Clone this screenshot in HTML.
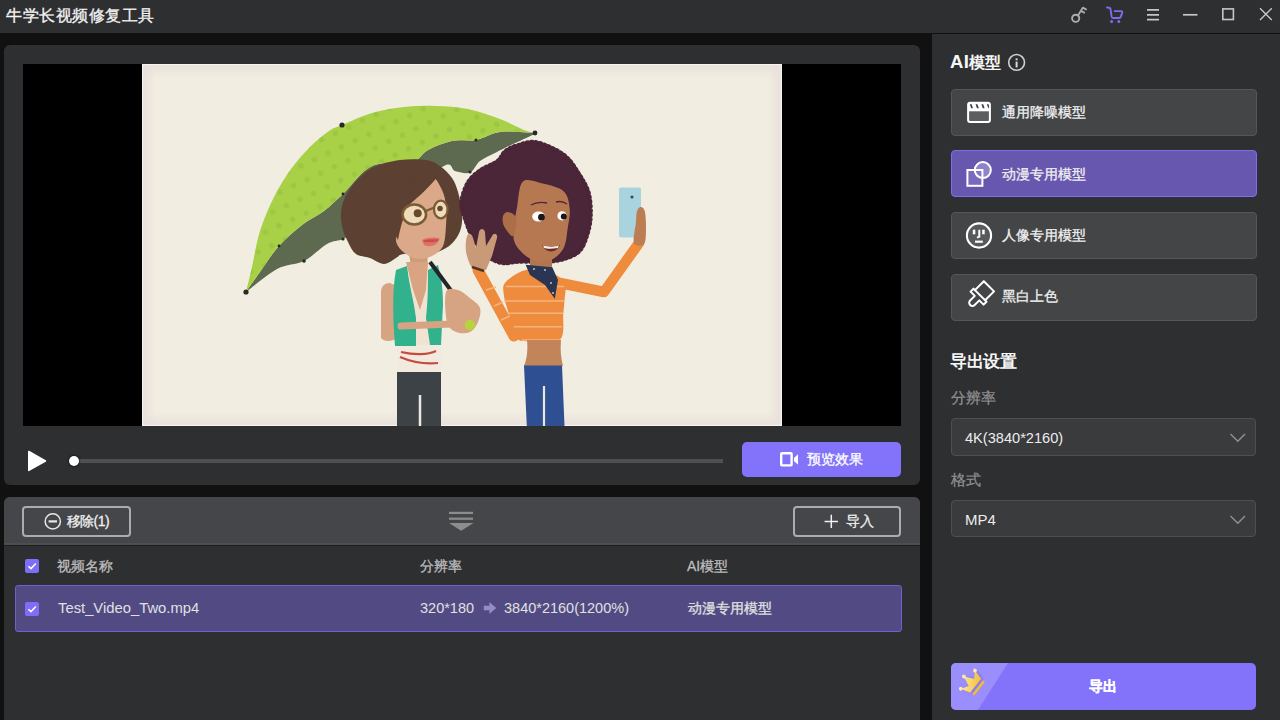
<!DOCTYPE html>
<html><head><meta charset="utf-8">
<style>
*{margin:0;padding:0;box-sizing:border-box}
html,body{width:1280px;height:720px;overflow:hidden;background:#111111;font-family:"Liberation Sans",sans-serif;color:#e6e6e6}
.a{position:absolute}
svg{position:absolute;overflow:visible}
#title{left:0;top:0;width:1280px;height:33px;background:#2e2f31}
.tt{left:6px;top:5px;font-size:16px;letter-spacing:0.5px;-webkit-text-stroke-width:0.3px;color:#f4f4f4;line-height:22px;white-space:nowrap}
#vpanel{left:4px;top:45px;width:916px;height:440px;background:#2e2f31;border-radius:6px}
#video{left:23px;top:64px;width:878px;height:362px;background:#000;overflow:hidden}
#bpanel{left:4px;top:497px;width:916px;height:223px;background:#2e2f31;border-radius:6px 6px 0 0;overflow:hidden}
#bhead{left:0;top:0;width:916px;height:49px;background:linear-gradient(#454649 0,#454649 45.7px,#4d4e50 45.7px,#4d4e50 47.5px,#1d1e20 47.5px,#1d1e20 48.8px,#2e2f31 48.8px)}
#rpanel{left:932px;top:34px;width:348px;height:686px;background:#2e2f31}
.obtn{border:2px solid #acacac;border-radius:4px;height:31.5px;top:505.5px}
.txt{white-space:nowrap;line-height:20px;-webkit-text-stroke-width:0.3px}
.mbtn{left:951px;width:305.5px;height:47px;background:#444547;border:1px solid #55565a;border-radius:4px}
.mbtn.sel{background:#6757ae;border:1.6px solid #7d6ef0}
.mtxt{left:1002px;font-size:14px;color:#f0f0f0}
.selb{left:951px;width:305px;height:37px;background:#3a3b3d;border:1px solid #4e4f52;border-radius:4px}
.lbl{font-size:15.2px;color:#8e8e8e}
.hdr{font-size:16.5px;font-weight:bold;color:#f7f7f7;-webkit-text-stroke-width:0}
.pbtn{background:#8373fb;border-radius:5px}
.cb{width:14px;height:14px;background:#7d6df7;border-radius:2px}
.col{font-size:14px;color:#bdbdbd}
.row{font-size:14.5px;color:#e0e0e0;-webkit-text-stroke-width:0}
.zh{-webkit-text-stroke-width:0.3px}
</style></head><body>
<div id="title" class="a"><div class="tt a">牛学长视频修复工具</div>
<!-- key -->
<svg style="left:1064px;top:0px" width="28" height="30" viewBox="1064 0 28 30">
 <circle cx="1075.7" cy="18.3" r="3.6" fill="none" stroke="#adadad" stroke-width="1.9"/>
 <path d="M1078 15.5 L1082.8 7.6 L1086 9.4 M1081.1 10.9 L1084.2 12.6" fill="none" stroke="#adadad" stroke-width="1.8" stroke-linecap="round" stroke-linejoin="round"/>
</svg>
<!-- cart -->
<svg style="left:1100px;top:0px" width="30" height="30" viewBox="1100 0 30 30">
 <path d="M1107 7.5 Q1110 7.3 1110.4 8.6 L1111.6 16.4 Q1112 18 1113.6 18 L1119 18 Q1120.4 18 1120.9 16.6 L1122.2 12.6 Q1122.6 11.1 1121 11.1 L1114.6 11.1" fill="none" stroke="#7c6df2" stroke-width="1.9" stroke-linecap="round" stroke-linejoin="round"/>
 <circle cx="1111.6" cy="21.6" r="1.5" fill="#7c6df2"/><circle cx="1118.8" cy="21.6" r="1.5" fill="#7c6df2"/>
</svg>
<!-- menu -->
<svg style="left:1140px;top:0px" width="26" height="30" viewBox="1140 0 26 30"><path d="M1147 9.9 H1159 M1147 14.8 H1159 M1147 19.6 H1159" stroke="#c6c6c6" stroke-width="1.7"/></svg>
<!-- min -->
<svg style="left:1180px;top:0px" width="20" height="30" viewBox="1180 0 20 30"><path d="M1183 14.8 H1197.5" stroke="#c6c6c6" stroke-width="1.7"/></svg>
<!-- max -->
<svg style="left:1218px;top:4px" width="20" height="20" viewBox="1218 4 20 20"><rect x="1222.8" y="8.9" width="10.6" height="10.6" fill="none" stroke="#c6c6c6" stroke-width="1.6"/></svg>
<!-- close -->
<svg style="left:1259px;top:7px" width="14" height="14" viewBox="0 0 14 14"><path d="M1 1.2 L12.8 13 M12.8 1.2 L1 13" stroke="#c9c9c9" stroke-width="1.4"/></svg>
</div>

<div id="vpanel" class="a"></div>
<div id="video" class="a"></div>
<svg style="left:142px;top:64px" width="640" height="362" viewBox="142 64 640 362">
 <defs>
  <filter id="bl" x="-5%" y="-5%" width="110%" height="110%"><feGaussianBlur stdDeviation="4"/></filter>
  <filter id="sb"><feGaussianBlur stdDeviation="0.55"/></filter>
  <clipPath id="imgclip"><rect x="142" y="64" width="640" height="362"/></clipPath>
  <pattern id="dots" width="15" height="15" patternUnits="userSpaceOnUse" patternTransform="rotate(-25)">
   <circle cx="7.5" cy="7.5" r="2.8" fill="#8cb83a" opacity="0.4"/>
  </pattern>
 </defs>
 <g clip-path="url(#imgclip)">
 <rect x="142" y="64" width="640" height="362" fill="#f1eee1"/>
 <rect x="142" y="64" width="640" height="362" fill="none" stroke="#e9e1dc" stroke-width="16" filter="url(#bl)"/>
 <rect x="142.5" y="64.5" width="639" height="361" fill="none" stroke="#f6f2ee" stroke-width="1.2"/>
 </g>
 <g filter="url(#sb)">
<path d="M246.0 292.0 C251.2 288.2 267.3 274.2 277.0 269.0 C286.7 263.8 295.7 265.2 304.0 261.0 C312.3 256.8 320.5 247.7 327.0 244.0 C333.5 240.3 338.3 241.2 343.0 239.0 C347.7 236.8 345.5 237.5 355.0 231.0 C364.5 224.5 385.2 210.8 400.0 200.0 C414.8 189.2 434.8 170.8 444.0 166.0 C453.2 161.2 450.7 169.9 455.0 171.0 C459.3 172.1 465.8 174.2 470.0 172.5 C474.2 170.8 475.7 164.3 480.0 161.0 C484.3 157.7 490.8 155.2 496.0 152.5 C501.2 149.8 504.5 148.1 511.0 145.0 C517.5 141.9 531.0 135.8 535.0 134.0 L535 133 C529.2 132.8 509.8 130.8 500.0 132.0 C490.2 133.2 484.0 138.5 476.0 140.0 C468.0 141.5 460.0 139.3 452.0 141.0 C444.0 142.7 434.7 146.5 428.0 150.0 C421.3 153.5 421.3 159.3 412.0 162.0 C402.7 164.7 383.5 160.7 372.0 166.0 C360.5 171.3 351.0 186.5 343.0 194.0 C335.0 201.5 330.8 205.8 324.0 211.0 C317.2 216.2 309.5 219.2 302.0 225.0 C294.5 230.8 286.0 238.2 279.0 246.0 C272.0 253.8 265.5 264.3 260.0 272.0 C254.5 279.7 248.3 288.7 246.0 292.0 Z" fill="#5d6a50"/>
<path d="M246.0 292.0 C247.0 287.8 249.7 277.2 252.0 267.0 C254.3 256.8 256.3 242.7 260.0 231.0 C263.7 219.3 268.8 207.3 274.0 197.0 C279.2 186.7 285.0 177.3 291.0 169.0 C297.0 160.7 303.7 153.3 310.0 147.0 C316.3 140.7 323.7 134.7 329.0 131.0 C334.3 127.3 334.8 128.0 342.0 125.0 C349.2 122.0 361.7 116.0 372.0 113.0 C382.3 110.0 393.3 108.2 404.0 107.0 C414.7 105.8 425.3 105.7 436.0 106.0 C446.7 106.3 457.3 106.8 468.0 109.0 C478.7 111.2 490.7 115.5 500.0 119.0 C509.3 122.5 518.2 127.7 524.0 130.0 C529.8 132.3 533.2 132.5 535.0 133.0 C529.2 132.8 509.8 130.8 500.0 132.0 C490.2 133.2 484.0 138.5 476.0 140.0 C468.0 141.5 460.0 139.3 452.0 141.0 C444.0 142.7 434.7 146.5 428.0 150.0 C421.3 153.5 421.3 159.3 412.0 162.0 C402.7 164.7 383.5 160.7 372.0 166.0 C360.5 171.3 351.0 186.5 343.0 194.0 C335.0 201.5 330.8 205.8 324.0 211.0 C317.2 216.2 309.5 219.2 302.0 225.0 C294.5 230.8 286.0 238.2 279.0 246.0 C272.0 253.8 265.5 264.3 260.0 272.0 C254.5 279.7 248.3 288.7 246.0 292.0 Z" fill="#a8d147"/>
<path d="M246.0 292.0 C247.0 287.8 249.7 277.2 252.0 267.0 C254.3 256.8 256.3 242.7 260.0 231.0 C263.7 219.3 268.8 207.3 274.0 197.0 C279.2 186.7 285.0 177.3 291.0 169.0 C297.0 160.7 303.7 153.3 310.0 147.0 C316.3 140.7 323.7 134.7 329.0 131.0 C334.3 127.3 334.8 128.0 342.0 125.0 C349.2 122.0 361.7 116.0 372.0 113.0 C382.3 110.0 393.3 108.2 404.0 107.0 C414.7 105.8 425.3 105.7 436.0 106.0 C446.7 106.3 457.3 106.8 468.0 109.0 C478.7 111.2 490.7 115.5 500.0 119.0 C509.3 122.5 518.2 127.7 524.0 130.0 C529.8 132.3 533.2 132.5 535.0 133.0 C529.2 132.8 509.8 130.8 500.0 132.0 C490.2 133.2 484.0 138.5 476.0 140.0 C468.0 141.5 460.0 139.3 452.0 141.0 C444.0 142.7 434.7 146.5 428.0 150.0 C421.3 153.5 421.3 159.3 412.0 162.0 C402.7 164.7 383.5 160.7 372.0 166.0 C360.5 171.3 351.0 186.5 343.0 194.0 C335.0 201.5 330.8 205.8 324.0 211.0 C317.2 216.2 309.5 219.2 302.0 225.0 C294.5 230.8 286.0 238.2 279.0 246.0 C272.0 253.8 265.5 264.3 260.0 272.0 C254.5 279.7 248.3 288.7 246.0 292.0 Z" fill="url(#dots)"/>
<circle cx="342" cy="125" r="2.6" fill="#2a2a22"/>
<circle cx="246" cy="292" r="2.6" fill="#2a2a22"/>
<circle cx="535" cy="133" r="2.4" fill="#2a2a22"/>
<circle cx="304" cy="261" r="1.8" fill="#2a2a22"/>
<circle cx="343" cy="239" r="1.6" fill="#2a2a22"/>
<circle cx="470" cy="172" r="1.6" fill="#2a2a22"/>
<circle cx="279" cy="246" r="1.4" fill="#2a2a22"/>
<circle cx="343" cy="194" r="1.4" fill="#2a2a22"/>
<circle cx="476" cy="140" r="1.5" fill="#2a2a22"/>
<path d="M352.0 186.0 C357.0 179.7 364.0 172.3 372.0 168.0 C380.0 163.7 391.0 161.3 400.0 160.0 C409.0 158.7 419.3 159.0 426.0 160.0 C432.7 161.0 435.7 163.0 440.0 166.0 C444.3 169.0 449.0 173.7 452.0 178.0 C455.0 182.3 456.3 186.3 458.0 192.0 C459.7 197.7 461.5 206.0 462.0 212.0 C462.5 218.0 462.2 223.3 461.0 228.0 C459.8 232.7 457.5 236.7 455.0 240.0 C452.5 243.3 450.2 245.7 446.0 248.0 C441.8 250.3 437.0 253.0 430.0 254.0 C423.0 255.0 409.7 253.3 404.0 254.0 C398.3 254.7 399.3 256.3 396.0 258.0 C392.7 259.7 388.3 264.0 384.0 264.0 C379.7 264.0 374.7 259.7 370.0 258.0 C365.3 256.3 359.7 256.7 356.0 254.0 C352.3 251.3 350.3 246.7 348.0 242.0 C345.7 237.3 343.0 232.0 342.0 226.0 C341.0 220.0 340.3 212.7 342.0 206.0 C343.7 199.3 347.0 192.3 352.0 186.0 Z" fill="#5c3f30"/>
<path d="M408 248 L428 248 L427 272 L420 298 L412 272 Z" fill="#cf9b78"/>
<path d="M396.0 236.0 C396.3 230.3 397.7 219.3 400.0 212.0 C402.3 204.7 404.8 197.8 410.0 192.0 C415.2 186.2 425.7 177.3 431.0 177.0 C436.3 176.7 439.5 185.2 442.0 190.0 C444.5 194.8 445.3 200.0 446.0 206.0 C446.7 212.0 446.5 219.3 446.0 226.0 C445.5 232.7 445.3 241.0 443.0 246.0 C440.7 251.0 436.2 253.8 432.0 256.0 C427.8 258.2 422.3 259.3 418.0 259.0 C413.7 258.7 409.3 256.2 406.0 254.0 C402.7 251.8 399.7 249.0 398.0 246.0 C396.3 243.0 395.7 241.7 396.0 236.0 Z" fill="#dba98a" />
<path d="M394 200 C404 178 424 168 440 174 C432 184 420 196 410 204 C404 214 400 228 398 240 C390 228 390 212 394 200 Z" fill="#5c3f30"/>
<ellipse cx="414.3" cy="214.5" rx="11.8" ry="9.9" fill="#efdcbc" stroke="#7a5b35" stroke-width="2.5"/>
<ellipse cx="440.8" cy="209.5" rx="6.8" ry="8.8" fill="#efdcbc" stroke="#7a5b35" stroke-width="2.3"/>
<path d="M425.8 211 L434.2 207.6" stroke="#7a5b35" stroke-width="2.2"/>
<circle cx="417.7" cy="213.3" r="4" fill="#6b4a2c"/>
<circle cx="440" cy="208.5" r="2.8" fill="#6b4a2c"/>
<path d="M422 240 C427 237 435 237 439.6 238.5 C438 245 431 248 424 245 Z" fill="#e2706a"/>
<path d="M423 240.5 C428 239 435 239 439 239.5 L437 241.5 C431 242.5 427 242.5 424 242 Z" fill="#c8504a"/>
<path d="M381 292 C381 286 385 283 390 283 L397 286 L397 338 C392 342 384 342 381 338 Z" fill="#d6a482"/>
<path d="M397 344 L441 344 L441 373 L397 373 Z" fill="#f3eadf"/>
<path d="M401 352 C414 355 428 355 436 351 M400 357 C414 363 428 364 438 363" fill="none" stroke="#c44c3e" stroke-width="2.2"/>
<path d="M410 268 L430 268 L434 345 L404 345 Z" fill="#f1e3d3"/>
<path d="M406 262 L428 262 L426 290 L420 310 L413 290 Z" fill="#d9a482"/>
<path d="M396 270 L407 266 C410 290 414 300 416 318 L416 346 L395 346 C393 320 392 290 396 270 Z" fill="#30b18d"/>
<path d="M428 270 L438 265 C442 280 443 292 443 305 L441 345 L430 345 L426 318 C428 300 428 284 428 270 Z" fill="#30b18d"/>
<path d="M397 372 L441 372 L441 426 L397 426 Z" fill="#3e4347"/>
<path d="M420 395 L420 426" stroke="#ece8e0" stroke-width="2.5"/>
<path d="M401 326 L452 324" stroke="#d6a482" stroke-width="7" stroke-linecap="round"/>
<path d="M430 262 L458 300" stroke="#23262a" stroke-width="4"/>
<path d="M446.0 292.0 C447.8 286.7 454.0 289.0 458.0 290.0 C462.0 291.0 466.3 295.0 470.0 298.0 C473.7 301.0 478.7 304.0 480.0 308.0 C481.3 312.0 479.7 318.0 478.0 322.0 C476.3 326.0 473.7 330.3 470.0 332.0 C466.3 333.7 459.8 333.7 456.0 332.0 C452.2 330.3 448.7 328.7 447.0 322.0 C445.3 315.3 444.2 297.3 446.0 292.0 Z" fill="#d6a482" />
<circle cx="470" cy="325" r="5.2" fill="#b6d43e"/>
<path d="M461.0 202.5 C461.5 196.5 464.3 187.9 467.5 182.5 C470.7 177.1 475.1 173.6 480.0 170.0 C484.9 166.4 492.8 164.2 497.0 161.0 C501.2 157.8 501.6 153.7 505.0 151.0 C508.4 148.3 512.2 146.5 517.5 145.0 C522.8 143.5 528.9 140.4 536.6 142.0 C544.3 143.6 556.7 149.1 563.8 154.4 C570.9 159.7 575.2 167.4 579.4 173.9 C583.6 180.4 587.2 186.2 589.1 193.3 C591.0 200.4 591.3 209.5 591.0 216.6 C590.7 223.7 589.1 230.2 587.2 236.0 C585.3 241.8 583.3 247.7 579.4 251.6 C575.5 255.5 569.4 257.7 563.8 259.4 C558.2 261.1 553.5 261.6 546.0 262.0 C538.5 262.4 526.4 261.8 519.0 262.0 C511.6 262.2 507.1 264.4 501.6 263.3 C496.1 262.2 490.9 259.7 486.0 255.5 C481.1 251.3 476.1 244.2 472.5 238.0 C468.9 231.8 466.6 224.5 464.7 218.6 C462.8 212.7 460.5 208.5 461.0 202.5 Z" fill="#4b2537"/>
<path d="M461.0 202.5 C461.5 196.5 464.3 187.9 467.5 182.5 C470.7 177.1 475.1 173.6 480.0 170.0 C484.9 166.4 492.8 164.2 497.0 161.0 C501.2 157.8 501.6 153.7 505.0 151.0 C508.4 148.3 512.2 146.5 517.5 145.0 C522.8 143.5 528.9 140.4 536.6 142.0 C544.3 143.6 556.7 149.1 563.8 154.4 C570.9 159.7 575.2 167.4 579.4 173.9 C583.6 180.4 587.2 186.2 589.1 193.3 C591.0 200.4 591.3 209.5 591.0 216.6 C590.7 223.7 589.1 230.2 587.2 236.0 C585.3 241.8 583.3 247.7 579.4 251.6 C575.5 255.5 569.4 257.7 563.8 259.4 C558.2 261.1 553.5 261.6 546.0 262.0 C538.5 262.4 526.4 261.8 519.0 262.0 C511.6 262.2 507.1 264.4 501.6 263.3 C496.1 262.2 490.9 259.7 486.0 255.5 C481.1 251.3 476.1 244.2 472.5 238.0 C468.9 231.8 466.6 224.5 464.7 218.6 C462.8 212.7 460.5 208.5 461.0 202.5 Z" fill="none" stroke="#4b2537" stroke-width="3.5" stroke-dasharray="1.5 3" stroke-linecap="round"/>
<rect x="530" y="252" width="22" height="22" fill="#b27550"/>
<path d="M523.0 181.6 C527.2 177.9 535.7 182.0 542.5 183.6 C549.3 185.2 559.3 187.2 563.8 191.4 C568.3 195.6 569.1 202.8 569.7 208.9 C570.4 215.1 568.7 221.8 567.7 228.3 C566.7 234.8 566.4 242.5 563.8 247.7 C561.2 252.9 556.7 257.1 552.2 259.4 C547.7 261.7 541.8 262.6 536.6 261.3 C531.4 260.0 524.9 255.8 521.0 251.6 C517.1 247.4 513.9 243.6 513.3 236.0 C512.7 228.4 515.6 215.1 517.2 206.0 C518.8 196.9 518.8 185.3 523.0 181.6 Z" fill="#b67851" />
<path d="M513.0 236.0 C511.0 237.3 505.7 229.3 504.0 226.0 C502.3 222.7 502.3 218.3 503.0 216.0 C503.7 213.7 505.8 211.7 508.0 212.0 C510.2 212.3 515.2 214.0 516.0 218.0 C516.8 222.0 515.0 234.7 513.0 236.0 Z" fill="#ac6d48" />
<ellipse cx="538.6" cy="216.6" rx="6.4" ry="5" fill="#fff"/><circle cx="541.5" cy="217.2" r="3.4" fill="#1e1416"/>
<ellipse cx="562" cy="215.8" rx="4.6" ry="4.6" fill="#fff"/><circle cx="563.8" cy="216.5" r="3" fill="#1e1416"/>
<path d="M531 205 C536 202 542 202 547 203 M556 202 C560 201 564 202 567 204" fill="none" stroke="#4b2537" stroke-width="1.4"/>
<path d="M542 245 C548 247 555 247 560 245 C557 253 546 254 542 245 Z" fill="#6a2b2a"/>
<path d="M543 245.5 C548 247 555 247 559 245.5 L558 248 C552 249 547 249 544 248 Z" fill="#f4eee6"/>
<path d="M506.0 281.7 C510.1 277.6 519.9 270.8 528.0 269.6 C536.1 268.4 548.6 271.8 554.8 274.4 C561.0 277.0 563.4 280.7 565.0 285.0 C566.6 289.3 564.8 295.3 564.5 300.0 C564.2 304.7 564.1 306.6 563.3 313.3 C562.5 320.0 565.5 335.3 559.6 340.0 C553.7 344.7 535.3 341.8 528.0 341.3 C520.7 340.8 519.2 341.7 516.0 337.0 C512.8 332.3 510.7 320.5 508.6 313.3 C506.6 306.1 504.1 299.2 503.7 293.9 C503.3 288.6 501.9 285.8 506.0 281.7 Z" fill="#ee8b3d" />
<path d="M560 283 L604 292 L639 243" fill="none" stroke="#ee8b3d" stroke-width="10.5" stroke-linejoin="round" stroke-linecap="round"/>
<path d="M478 270 L514 336" stroke="#ee8b3d" stroke-width="11" stroke-linecap="round"/>
<path d="M506 286.6 L564 286.6 M504 301 L564 301 M508 313.3 L563 313.3 M514 326.7 L562 326.7 M522 340 L560 340" stroke="#f7b985" stroke-width="1.5" opacity="0.9"/>
<path d="M486 290 L496 287 M494 306 L503 302 M501 320 L510 316" stroke="#f7b985" stroke-width="1.5" opacity="0.9"/>
<path d="M525.6 264.7 L552.3 267.2 L558 280 L554.8 298.7 L545 285 L530 275 Z" fill="#2a3552"/>
<circle cx="534" cy="269" r="1" fill="#c8c8b0"/><circle cx="545" cy="270" r="1" fill="#c8c8b0"/><circle cx="551" cy="283" r="1" fill="#c8c8b0"/><circle cx="553" cy="293" r="1" fill="#c8c8b0"/>
<path d="M527 340 L561 340 C560 350 561 358 563 366 L524 366 C527 358 528 350 527 340 Z" fill="#c2855a"/>
<path d="M524 365.6 L562 365.6 L564.5 426 L526.8 426 Z" fill="#2f4f92"/>
<path d="M544 386 L544 426" stroke="#e9e6de" stroke-width="2.2"/>
<rect x="619" y="187.5" width="22" height="50" rx="2" fill="#a9d3de"/>
<circle cx="632" cy="197" r="1.6" fill="#36505a"/>
<path d="M634.0 243.0 C632.7 239.3 635.5 227.3 636.0 222.0 C636.5 216.7 636.2 213.5 637.0 211.0 C637.8 208.5 639.7 206.8 641.0 207.0 C642.3 207.2 644.2 208.2 645.0 212.0 C645.8 215.8 646.2 224.7 646.0 230.0 C645.8 235.3 646.0 241.8 644.0 244.0 C642.0 246.2 635.3 246.7 634.0 243.0 Z" fill="#bd7d52" />
<path d="M472 268 C466 258 464 246 467 236 C469 232 472 234 473 238 L476 248 L479 232 C480 228 484 228 485 232 L486 246 L492 236 C494 232 498 234 497 238 L492 256 L486 270 Z" fill="#c99a78"/>
<path d="M472 267 L484 271" stroke="#5a3020" stroke-width="2.5"/>
 </g>
</svg>

<!-- controls -->
<svg style="left:27px;top:449.6px" width="20" height="22" viewBox="0 0 20 22"><path d="M2.2 0.8 Q1 0.2 1 1.8 L1 20.2 Q1 21.6 2.2 21 L18.8 11.8 Q19.8 11 18.8 10.2 Z" fill="#fff"/></svg>
<div class="a" style="left:74px;top:458.5px;width:649px;height:4px;background:#4f5052"></div>
<div class="a" style="left:69px;top:455.6px;width:10px;height:10px;border-radius:50%;background:#fff;box-shadow:0 0 1.5px 1px rgba(0,0,0,0.45)"></div>
<div class="a pbtn" style="left:742px;top:442px;width:159px;height:35px"></div>
<svg style="left:774px;top:446px" width="30" height="26" viewBox="774 446 30 26"><rect x="781.2" y="453.3" width="10.4" height="12.1" rx="0.8" fill="none" stroke="#fff" stroke-width="2.4"/><path d="M794 458 L798 454.3 L798 464.4 L794 461.2 Z" fill="#fff"/></svg>
<div class="a txt" style="left:807px;top:449px;font-size:14.2px;color:#fff">预览效果</div>

<div id="bpanel" class="a"><div id="bhead" class="a"></div></div>
<div class="a obtn" style="left:22px;width:109px"></div>
<svg style="left:43px;top:512px" width="20" height="20" viewBox="0 0 20 20"><circle cx="9.8" cy="9.4" r="7.6" fill="none" stroke="#e8e8e8" stroke-width="1.5"/><path d="M5.6 9.4 H14" stroke="#e8e8e8" stroke-width="2.2"/></svg>
<div class="a txt" style="left:66.5px;top:511px;font-size:14px;letter-spacing:-0.5px;color:#f0f0f0">移除(1)</div>
<svg style="left:449px;top:511px" width="25" height="21" viewBox="0 0 25 21"><rect x="0" y="0.8" width="24" height="2.2" fill="#8d8d8d"/><rect x="0" y="6.6" width="24" height="2.2" fill="#8d8d8d"/><path d="M0 12 L24.5 12 L12.2 19.8 Z" fill="#8d8d8d"/></svg>
<div class="a obtn" style="left:793px;width:108px"></div>
<svg style="left:824px;top:514px" width="15" height="15" viewBox="0 0 15 15"><path d="M0.6 7.5 H14 M7.3 0.8 V14" stroke="#f0f0f0" stroke-width="1.5"/></svg>
<div class="a txt" style="left:846px;top:511px;font-size:14px;color:#f0f0f0">导入</div>

<div class="a cb" style="left:25px;top:559px"></div>
<svg style="left:25px;top:559px" width="14" height="14" viewBox="0 0 14 14"><path d="M3.4 7.2 L6 9.6 L10.8 4.6" fill="none" stroke="#fff" stroke-width="1.5"/></svg>
<div class="a txt col" style="left:57px;top:556px">视频名称</div>
<div class="a txt col" style="left:420px;top:556px">分辨率</div>
<div class="a txt col" style="left:687px;top:556px">AI模型</div>

<div class="a" style="left:15px;top:585px;width:887px;height:47px;background:#524a83;border:1px solid #6e5fd2;border-radius:3px"></div>
<div class="a cb" style="left:24.8px;top:601.8px"></div>
<svg style="left:24.8px;top:601.8px" width="14" height="14" viewBox="0 0 14 14"><path d="M3.4 7.2 L6 9.6 L10.8 4.6" fill="none" stroke="#fff" stroke-width="1.5"/></svg>
<div class="a txt row" style="left:58px;top:598px;font-size:14.8px">Test_Video_Two.mp4</div>
<div class="a txt row" style="left:420px;top:598px">320*180</div>
<svg style="left:476px;top:596px" width="30" height="24" viewBox="476 596 30 24"><path d="M483.8 605.7 H489.4 V602 L496.2 608 L489.4 614 V610.3 H483.8 Z" fill="#968cc0"/></svg>
<div class="a txt row" style="left:504px;top:598px">3840*2160(1200%)</div>
<div class="a txt row zh" style="left:688px;top:598px;font-size:14px">动漫专用模型</div>

<div id="rpanel" class="a"></div>
<div class="a txt hdr" style="left:950px;top:52.2px;font-size:16.3px"><span style="font-size:18.5px;letter-spacing:0.3px">AI</span>模型</div>
<svg style="left:1004px;top:50px" width="26" height="26" viewBox="1004 50 26 26"><circle cx="1016.6" cy="62.4" r="7.9" fill="none" stroke="#d0d0d0" stroke-width="1.6"/><rect x="1015.6" y="61.6" width="2" height="5.8" fill="#d8d8d8"/><rect x="1015.6" y="58.4" width="2" height="1.9" fill="#d8d8d8"/></svg>

<div class="a mbtn" style="top:89px"></div>
<svg style="left:960px;top:96px" width="40" height="32" viewBox="960 96 40 32">
 <rect x="968.1" y="102.8" width="21.8" height="19.3" rx="2" fill="#5d5e61" stroke="#fff" stroke-width="2"/>
 <rect x="968.1" y="102.8" width="21.8" height="7.4" fill="#fff"/>
 <path d="M969.8 104.2 L971.6 104.2 L973 108.2 L971.2 108.2 Z M975.6 104.2 L977.4 104.2 L978.8 108.2 L977 108.2 Z M981.4 104.2 L983.2 104.2 L984.6 108.2 L982.8 108.2 Z M986.8 104.2 L988.6 104.2 L989.2 107 L988.4 108.2 Z" fill="#3a3b3d"/>
 <rect x="968.1" y="109.5" width="21.8" height="1.8" fill="#fff"/>
</svg>
<div class="a txt mtxt" style="top:102px">通用降噪模型</div>

<div class="a mbtn sel" style="top:150.3px;height:47.2px"></div>
<svg style="left:960px;top:154px" width="40" height="40" viewBox="960 154 40 40">
 <circle cx="982.8" cy="170.1" r="8" fill="#8f84c9" stroke="#fff" stroke-width="2"/>
 <rect x="967.4" y="170" width="15" height="15.8" fill="#7e72c2" fill-opacity="0.75" stroke="#fff" stroke-width="2"/>
 <path d="M974.8 170 A8 8 0 0 0 982.4 178" fill="none" stroke="#fff" stroke-width="2"/>
</svg>
<div class="a txt mtxt" style="top:164px">动漫专用模型</div>

<div class="a mbtn" style="top:212px"></div>
<svg style="left:960px;top:215px" width="40" height="40" viewBox="960 215 40 40">
 <circle cx="979" cy="235.5" r="12.1" fill="#58595c" stroke="#fff" stroke-width="2.1"/>
 <rect x="972.8" y="229.7" width="2.5" height="4.6" fill="#fff"/>
 <rect x="982.2" y="229.7" width="2.5" height="4.6" fill="#fff"/>
 <path d="M979.3 229.7 V236.6 L977 237.6" fill="none" stroke="#fff" stroke-width="2"/>
 <rect x="975" y="240.6" width="7.8" height="2.2" fill="#fff"/>
</svg>
<div class="a txt mtxt" style="top:225px">人像专用模型</div>

<div class="a mbtn" style="top:273.8px"></div>
<svg style="left:960px;top:276px" width="40" height="40" viewBox="960 276 40 40">
 <g transform="translate(979.6 295.6) rotate(45)">
 <path d="M-7.2 -13.2 H7.2 V-0.6 H9.2 V3.6 H3.2 V10.2 A3.2 3.2 0 0 1 -3.2 10.2 V3.6 H-9.2 V-0.6 H-7.2 Z" fill="none" stroke="#fff" stroke-width="2" stroke-linejoin="round"/>
 <path d="M-7.2 -0.6 H7.2" stroke="#fff" stroke-width="2"/>
 </g>
</svg>
<div class="a txt mtxt" style="top:286px">黑白上色</div>

<div class="a txt hdr" style="left:950px;top:351px;font-size:16.5px;letter-spacing:-0.4px">导出设置</div>
<div class="a txt lbl" style="left:951px;top:388px">分辨率</div>
<div class="a selb" style="top:418.2px;height:37.5px"></div>
<div class="a txt" style="left:965px;top:428px;font-size:14.6px;color:#ececec;-webkit-text-stroke-width:0">4K(3840*2160)</div>
<svg style="left:1229px;top:432px" width="18" height="12" viewBox="0 0 18 12"><path d="M1.5 2 L8.8 9.2 L16 2" fill="none" stroke="#8f8f8f" stroke-width="1.5"/></svg>
<div class="a txt lbl" style="left:951px;top:470px">格式</div>
<div class="a selb" style="top:500px;height:37.3px"></div>
<div class="a txt" style="left:965px;top:510px;font-size:15px;color:#ececec;-webkit-text-stroke-width:0">MP4</div>
<svg style="left:1229px;top:514px" width="18" height="12" viewBox="0 0 18 12"><path d="M1.5 2 L8.8 9.2 L16 2" fill="none" stroke="#8f8f8f" stroke-width="1.5"/></svg>

<div class="a" style="left:951px;top:663px;width:305px;height:47px;border-radius:5px;overflow:hidden;background:#8373fb">
 <svg style="left:0;top:0" width="305" height="47"><path d="M0 0 H57 L27 47 H0 Z" fill="#9a8dfc"/></svg>
</div>
<svg style="left:950px;top:660px" width="44" height="44" viewBox="950 660 44 44">
 <defs><linearGradient id="cg" x1="0" y1="0" x2="1" y2="1"><stop offset="0" stop-color="#fff0a8"/><stop offset="1" stop-color="#f3bb34"/></linearGradient>
 <filter id="cs" x="-30%" y="-30%" width="160%" height="160%"><feGaussianBlur stdDeviation="1.2"/></filter></defs>
 <g transform="translate(971.8 682.7) rotate(-52)">
 <path d="M-9 5 L-11.5 -5 L-4.5 -0.5 L0 -10 L4.5 -0.5 L11.5 -5 L9 5 Z" fill="#5a48d8" opacity="0.45" filter="url(#cs)" transform="translate(0.8 1.2)"/>
 <path d="M-9 5 L-11.5 -5 L-4.5 -0.5 L0 -10 L4.5 -0.5 L11.5 -5 L9 5 Z" fill="url(#cg)"/>
 <circle cx="-11.5" cy="-5" r="1.9" fill="#ffe9a6"/><circle cx="0" cy="-10" r="1.9" fill="#ffe9a6"/><circle cx="11.5" cy="-5" r="1.9" fill="#ffe9a6"/>
 <rect x="-8.5" y="7.4" width="17" height="2.5" fill="#f4bd2a"/>
 </g>
</svg>
<div class="a txt" style="left:1089px;top:676px;font-size:14px;font-weight:bold;color:#fff">导出</div>
</body></html>
